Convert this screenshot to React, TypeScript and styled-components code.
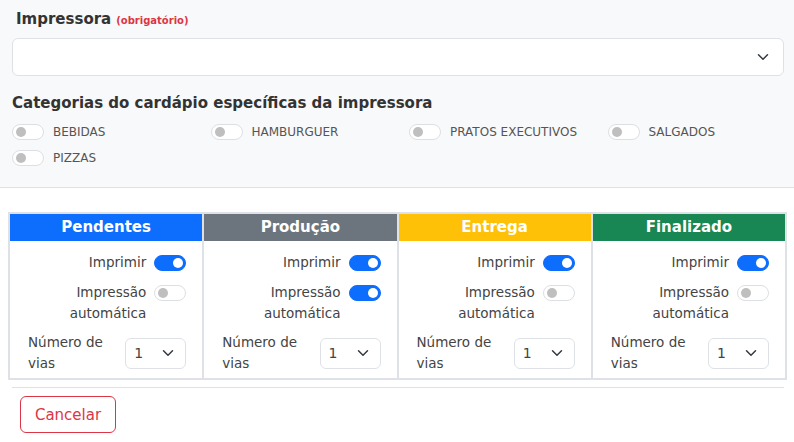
import * as React from 'react'
import styled, { createGlobalStyle } from 'styled-components'

const GlobalStyle = createGlobalStyle`
  html, body {
    margin: 0;
    padding: 0;
    background: #ffffff;
  }
  body {
    font-family: 'DejaVu Sans', 'Open Sans', sans-serif;
    color: #333333;
    width: 794px;
    overflow: hidden;
  }
  * { box-sizing: border-box; }
`

const StyledPage = styled.div`
  width: 794px;
  height: 442px;
  overflow: hidden;
`

const PrinterPanel = styled.div`
  background-color: #F8F9FA;
  border-bottom: 1px solid #DEE2E6;
  padding: 9px 10px 16px 12px;
`

const FieldLabel = styled.label`
  display: flex;
  align-items: baseline;
  gap: 5px;
  padding-left: 4px;
  font-size: 15px;
  font-weight: 600;
  color: #333333;
  line-height: 20px;
`

const Required = styled.span`
  font-size: 10px;
  font-weight: 700;
  color: #DC3545;
`

const SelectBox = styled('div')<{small?: boolean}>`
  display: flex;
  align-items: center;
  justify-content: space-between;
  background: #FFFFFF;
  border: 1px solid #DEE2E6;
  border-radius: 6px;
  height: ${p => p.small ? '31px' : '38px'};
  width: ${p => p.small ? '61px' : '100%'};
  margin-top: ${p => p.small ? '0' : '7px'};
  padding: ${p => p.small ? '0 11px 0 8px' : '0 14px 0 12px'};
  font-size: 14px;
  color: #444444;
  flex-shrink: 0;
`

const Chevron = () => (
  <svg width='12' height='12' viewBox='0 0 16 16' fill='none'>
    <path d='M2 5l6 6 6-6' stroke='#343A40' strokeWidth='2' strokeLinecap='round' strokeLinejoin='round' />
  </svg>
)

const SectionTitle = styled.h3`
  margin: 17px 0 6px;
  font-size: 15px;
  font-weight: 700;
  color: #333333;
  line-height: 20px;
`

const CategoryGrid = styled.div`
  display: grid;
  grid-template-columns: repeat(4, 1fr);
  margin: 0 -10px 0 -12px;
`

const CategoryItem = styled.div`
  display: flex;
  align-items: center;
  gap: 9px;
  height: 26px;
  padding: 0 12px;
  font-size: 12px;
  color: #555555;
  text-transform: uppercase;
`

const Switch = styled('span')<{on?: boolean}>`
  position: relative;
  display: inline-block;
  flex-shrink: 0;
  width: 32px;
  height: 16px;
  border-radius: 8px;
  background: ${p => p.on ? '#0D6EFD' : '#FFFFFF'};
  border: 1px solid ${p => p.on ? '#0D6EFD' : '#DCDFE3'};
  &::after {
    content: '';
    position: absolute;
    top: 2px;
    left: ${p => p.on ? '18px' : '3px'};
    width: 10px;
    height: 10px;
    border-radius: 50%;
    background: ${p => p.on ? '#FFFFFF' : '#BFBFBF'};
  }
`

const StatusSection = styled.div`
  padding: 24px 7px 0 8px;
`

const StatusGrid = styled.div`
  display: grid;
  grid-template-columns: repeat(4, 1fr);
  gap: 2px;
  padding: 2px;
  background: #DEE2E6;
`

const StatusColumn = styled.div`
  background: #FFFFFF;
  display: flex;
  flex-direction: column;
`

const StatusHeader = styled('div')<{color: string}>`
  background: ${p => p.color};
  color: #FFFFFF;
  text-align: center;
  font-size: 15px;
  font-weight: 700;
  line-height: 27px;
  height: 27px;
`

const StatusBody = styled.div`
  display: flex;
  flex-direction: column;
  gap: 9px;
  padding: 11px 16px 4px 16px;
`

const OptionRow = styled.div`
  display: flex;
  align-items: flex-start;
  justify-content: flex-end;
  gap: 8px;
  font-size: 13.5px;
  line-height: 21px;
  color: #444444;
`

const OptionLabel = styled.span`
  max-width: 100px;
  text-align: right;
`

const SwitchSlot = styled.span`
  display: flex;
  align-items: center;
  height: 21px;
`

const CopiesRow = styled.div`
  display: flex;
  align-items: center;
  justify-content: space-between;
  margin-top: -1px;
  padding-left: 2px;
  font-size: 13.5px;
  line-height: 21px;
  color: #444444;
`

const CopiesLabel = styled.span`
  max-width: 90px;
`

const Footer = styled.div`
  margin: 7px 10px 0 12px;
  border-top: 1px solid #DEE2E6;
  padding: 8px 8px;
`

const CancelButton = styled.button`
  font-family: inherit;
  font-size: 15px;
  color: #DC3545;
  background: #FFFFFF;
  border: 1px solid #DC3545;
  border-radius: 6px;
  height: 37px;
  width: 96px;
  padding: 0;
`

const categories = ['Bebidas', 'Hamburguer', 'Pratos executivos', 'Salgados', 'Pizzas']

const statuses = [
  { title: 'Pendentes', color: '#0D6EFD', auto: false },
  { title: 'Produção', color: '#6C757D', auto: true },
  { title: 'Entrega', color: '#FFC107', auto: false },
  { title: 'Finalizado', color: '#198754', auto: false },
]

const App: React.FC = () => {
  return (
    <StyledPage>
      <GlobalStyle />
      <PrinterPanel>
        <FieldLabel>
          Impressora <Required>(obrigatório)</Required>
        </FieldLabel>
        <SelectBox>
          <span />
          <Chevron />
        </SelectBox>
        <SectionTitle>Categorias do cardápio específicas da impressora</SectionTitle>
        <CategoryGrid>
          {categories.map(c => (
            <CategoryItem key={c}>
              <Switch />
              {c}
            </CategoryItem>
          ))}
        </CategoryGrid>
      </PrinterPanel>

      <StatusSection>
        <StatusGrid>
          {statuses.map(s => (
            <StatusColumn key={s.title}>
              <StatusHeader color={s.color}>{s.title}</StatusHeader>
              <StatusBody>
                <OptionRow>
                  <OptionLabel>Imprimir</OptionLabel>
                  <SwitchSlot><Switch on={true} /></SwitchSlot>
                </OptionRow>
                <OptionRow>
                  <OptionLabel>Impressão automática</OptionLabel>
                  <SwitchSlot><Switch on={s.auto} /></SwitchSlot>
                </OptionRow>
                <CopiesRow>
                  <CopiesLabel>Número de vias</CopiesLabel>
                  <SelectBox small={true}>
                    1
                    <Chevron />
                  </SelectBox>
                </CopiesRow>
              </StatusBody>
            </StatusColumn>
          ))}
        </StatusGrid>
      </StatusSection>

      <Footer>
        <CancelButton>Cancelar</CancelButton>
      </Footer>
    </StyledPage>
  )
}

export default App
